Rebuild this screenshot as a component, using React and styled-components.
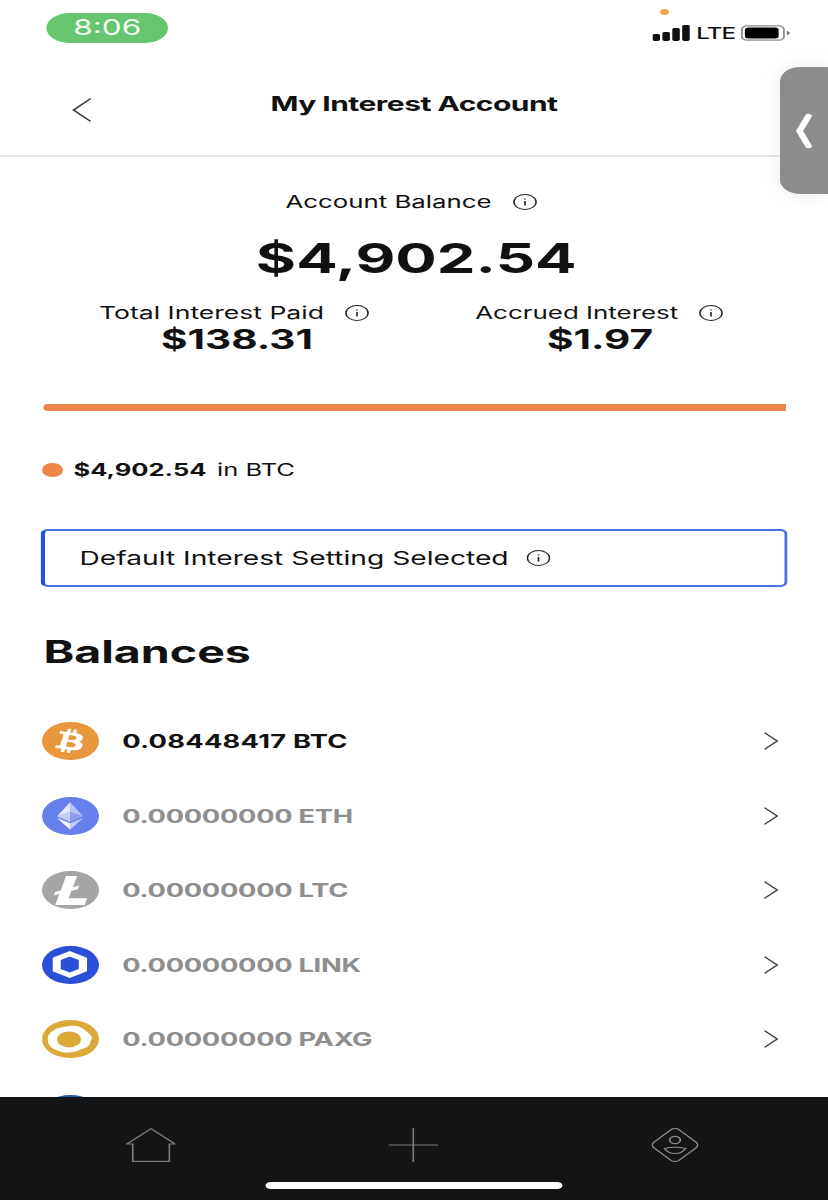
import React from "react";
import styled, { createGlobalStyle } from "styled-components";
import { FaBtc } from "react-icons/fa";

const GlobalStyle = createGlobalStyle`
  html, body {
    margin: 0;
    padding: 0;
    background: #fff;
    overflow: hidden;
  }
  body {
    font-family: Inter, "Liberation Sans", sans-serif;
  }
`;

// the capture is stretched horizontally, so the page is laid out at 552px and scaled up
const Page = styled.div`
  position: relative;
  width: 552px;
  height: 1200px;
  display: flex;
  flex-direction: column;
  overflow: hidden;
  background: #fff;
  color: #111;
  transform: scaleX(1.5);
  transform-origin: left top;
`;

const StatusBar = styled.div`
  height: 60px;
  flex: none;
  display: flex;
  justify-content: space-between;
  padding: 13px 25px 0 31px;
  box-sizing: border-box;
`;

const TimePill = styled.div`
  width: 81px;
  height: 30px;
  border-radius: 15px;
  background: #66c66e;
  color: #f4fbf4;
  font-size: 21px;
  line-height: 30px;
  text-align: center;
`;

const StatusIcons = styled.div`
  position: relative;
  display: flex;
  align-items: center;
  gap: 4px;
  height: 16px;
  margin-top: 12px;
`;

const Mic = styled.span`
  position: absolute;
  left: 5px;
  top: -16px;
  width: 6px;
  height: 6px;
  border-radius: 50%;
  background: #f2a54a;
`;

const Lte = styled.span`
  font-size: 16px;
  font-weight: 500;
  line-height: 16px;
  letter-spacing: -0.6px;
`;

const Header = styled.div`
  height: 97px;
  flex: none;
  box-sizing: border-box;
  border-bottom: 2px solid #e6e6e6;
  display: flex;
  align-items: center;
  justify-content: center;
  position: relative;
  padding-bottom: 7px;
`;

const Title = styled.h1`
  margin: 0;
  font-size: 20px;
  font-weight: 700;
  letter-spacing: -0.35px;
`;

const BackButton = styled.svg`
  position: absolute;
  left: 48px;
  top: 38px;
`;

const SideTab = styled.div`
  position: absolute;
  right: 0;
  top: 67px;
  width: 32px;
  height: 127px;
  background: #8c8c8c;
  border-radius: 14px 0 0 14px;
  box-shadow: 0 0 16px rgba(0, 0, 0, 0.08);
  display: flex;
  align-items: center;
  padding-left: 10px;
  box-sizing: border-box;
`;

const Summary = styled.section`
  flex: none;
  display: flex;
  flex-direction: column;
  align-items: center;
  padding-top: 33px;
`;

const LabelRow = styled.div`
  display: flex;
  align-items: center;
  gap: 14px;
  font-size: ${props => props.$size || 17.2}px;
  line-height: 24px;
  height: 24px;
  padding-right: ${props => (props.$nudge === undefined ? 4 : props.$nudge)}px;
`;

const BigAmount = styled.div`
  font-size: 41px;
  font-weight: 700;
  line-height: 56px;
  margin: 16px 0 15px 3px;
`;

const Stats = styled.div`
  align-self: stretch;
  display: grid;
  grid-template-columns: 1fr 1fr;
  padding: 0 31px 0 37px;
`;

const Stat = styled.div`
  display: flex;
  flex-direction: column;
  align-items: center;
`;

const StatValue = styled.div`
  font-size: 27px;
  font-weight: 700;
  line-height: 30px;
  margin: 0 0 -1px;
`;

const Bar = styled.div`
  flex: none;
  height: 7px;
  width: 495px;
  margin: 50px 0 0 29px;
  background: #ee864b;
  border-radius: 3px 0 0 3px;
`;

const Legend = styled.div`
  flex: none;
  display: flex;
  align-items: center;
  height: 24px;
  margin: 47px 0 0 28px;
  font-size: 17px;
`;

const LegendDot = styled.span`
  width: 13.5px;
  height: 14px;
  border-radius: 50%;
  background: #ee864b;
  margin-right: 7.5px;
`;

const LegendAmount = styled.b`
  font-weight: 700;
  margin-right: 7px;
`;

const Notice = styled.div`
  flex: none;
  box-sizing: border-box;
  width: 498px;
  height: 58px;
  margin: 47px 0 0 27px;
  padding-left: 23px;
  display: flex;
  align-items: center;
  gap: 12px;
  border: 2px solid #4a6fe0;
  border-left: 3px solid #2450e0;
  border-radius: 5px;
  font-size: 18.8px;
`;

const Heading = styled.h2`
  flex: none;
  margin: 43px 0 0 29px;
  font-size: 31px;
  line-height: 44px;
  font-weight: 700;
`;

const List = styled.div`
  flex: 1;
  min-height: 0;
  overflow: hidden;
  margin-top: 30px;
`;

const Row = styled.div`
  height: 74.5px;
  display: flex;
  align-items: center;
  padding: 0 33px 0 28px;
  color: ${props => (props.$active ? "#111" : "#8e8e8e")};
  font-size: 18.2px;
  font-weight: 700;
  letter-spacing: ${props => (props.$active ? "0.15px" : "-0.2px")};
`;

const Coin = styled.div`
  width: 37.5px;
  height: 38px;
  border-radius: 50%;
  flex: none;
  background: ${props => props.$bg};
  display: flex;
  align-items: center;
  justify-content: center;
  color: #fff;
  margin-right: 16px;
`;

const Amount = styled.span`
  flex: 1;
`;

const BottomBar = styled.nav`
  flex: none;
  height: 103px;
  background: #141516;
  position: relative;
  display: flex;
  justify-content: space-between;
  padding: 31px 86px 0 84px;
  box-sizing: border-box;
`;

const HomeIndicator = styled.div`
  position: absolute;
  left: 177px;
  top: 85px;
  width: 198px;
  height: 7px;
  border-radius: 4px;
  background: #fff;
`;

const Info = () => (
  <svg width="16" height="16" viewBox="0 0 16 16" fill="none" stroke="#222">
    <circle cx="8" cy="8" r="7.4" strokeWidth="1" />
    <path d="M8 7v4.4" strokeWidth="1.1" />
    <path d="M8 4.4v1.2" strokeWidth="1.1" />
  </svg>
);

const RowChevron = () => (
  <svg width="10" height="18" viewBox="0 0 10 18" fill="none" stroke="#444" strokeWidth="1.2">
    <path d="M.6.6 9.2 9 .6 17.4" />
  </svg>
);

const SignalBars = () => (
  <svg width="25" height="16" viewBox="0 0 25 16" fill="#111">
    <rect x="0" y="9" width="5" height="7" rx="1.4" />
    <rect x="6.6" y="7" width="5" height="9" rx="1.4" />
    <rect x="13.2" y="3" width="5" height="13" rx="1.4" />
    <rect x="19.8" y="0" width="5" height="16" rx="1.4" />
  </svg>
);

const Battery = () => (
  <svg width="33" height="16" viewBox="0 0 33 16">
    <rect x=".6" y=".8" width="28" height="14.4" rx="3.5" fill="none" stroke="#8a8a8a" strokeWidth="1.2" />
    <rect x="2.6" y="2.6" width="22.5" height="10.8" rx="2.5" fill="#000" />
    <path d="M30.6 5.6 32.8 8l-2.2 2.4z" fill="#777" />
  </svg>
);

const EthIcon = () => (
  <svg width="17.5" height="28" viewBox="0 0 19 30">
    <path d="M9.5 0 0 15.2l9.5-4.2z" fill="#e6e9fb" />
    <path d="M9.5 0 19 15.2 9.5 11z" fill="#b8c2f5" />
    <path d="M0 15.2 9.5 11v10.5z" fill="#c5cdf7" />
    <path d="M19 15.2 9.5 11v10.5z" fill="#8d9cef" />
    <path d="M0 17.3 9.5 30v-7z" fill="#f2f4fd" />
    <path d="M19 17.3 9.5 30v-7z" fill="#c5cdf7" />
  </svg>
);

const LtcIcon = () => (
  <svg width="24" height="29" viewBox="0 0 24 29" fill="#fff">
    <path d="M9 0h7.5l-3 11.2 4.4-1.7-1 3.7-4.4 1.7-1.8 7.4H23l-1.5 6.7H1.8l2.8-11L.8 19.4l1-3.6 3.7-1.4z" />
  </svg>
);

const LinkIcon = () => (
  <svg width="23" height="27" viewBox="0 0 23 27">
    <path d="M11.5 0 23 6.8v13.4L11.5 27 0 20.2V6.8z" fill="#fff" />
    <path d="M11.5 5.5 17.5 9v9l-6 3.5-6-3.5V9z" fill="#2a50d8" />
  </svg>
);

const PaxIcon = () => (
  <svg width="31" height="28" viewBox="0 0 33 30">
    <path d="M16 1C21 0 25 2 27 5c2 3 4 4 5 7 1 3-1 5-1 8-1 4-5 5-8 7-4 3-10 3-14 1-5-2-8-6-8-11C0 11 3 7 7 4c3-2 6-2 9-3z" fill="#fff" />
    <ellipse cx="16" cy="15.5" rx="8.5" ry="8.5" fill="#dca838" />
  </svg>
);

const HomeIcon = () => (
  <svg width="33.4" height="34" viewBox="0 0 33.4 34" fill="none" stroke="#7a7a7a" strokeWidth="1.1">
    <path d="M.6 16 16.7.6 32.8 16h-3.9v17.4H4.5V16z" />
  </svg>
);

const PlusIcon = () => (
  <svg width="33" height="34" viewBox="0 0 33 34" fill="none" stroke="#7a7a7a" strokeWidth="1.1">
    <path d="M16.5 0v34M0 17h33" />
  </svg>
);

const ProfileIcon = () => (
  <svg width="32" height="34" viewBox="0 0 32 34" fill="none" stroke="#8a8a8a" strokeWidth="1.1">
    <path d="M13.6 1.4c1.4-1.1 3.4-1.1 4.8 0l11.6 12.8c1.4 1.6 1.4 4 0 5.6L18.4 32.6c-1.4 1.1-3.4 1.1-4.8 0L2 19.8c-1.4-1.6-1.4-4 0-5.6z" />
    <circle cx="16" cy="12" r="3.6" />
    <path d="M9 20.5c4-1.6 10-1.6 14 0-1.4 3-4 5-7 5s-5.6-2-7-5z" />
  </svg>
);

const coins = [
  { code: "0.08448417 BTC", bg: "#e8973d", icon: <FaBtc size={24} style={{ transform: "rotate(12deg)" }} />, active: true },
  { code: "0.00000000 ETH", bg: "#6580ea", icon: <EthIcon /> },
  { code: "0.00000000 LTC", bg: "#a5a5a5", icon: <LtcIcon /> },
  { code: "0.00000000 LINK", bg: "#2a50d8", icon: <LinkIcon /> },
  { code: "0.00000000 PAXG", bg: "#dca838", icon: <PaxIcon /> },
];

export default function App() {
  return (
    <>
      <GlobalStyle />
      <Page>
        <StatusBar>
          <TimePill>8:06</TimePill>
          <StatusIcons>
            <Mic />
            <SignalBars />
            <Lte>LTE</Lte>
            <Battery />
          </StatusIcons>
        </StatusBar>

        <Header>
          <BackButton width="13" height="24" viewBox="0 0 13 24" fill="none" stroke="#333" strokeWidth="1.3">
            <path d="M12.4.6 1 12l11.4 11.4" />
          </BackButton>
          <Title>My Interest Account</Title>
        </Header>

        <SideTab>
          <svg width="12" height="36" viewBox="0 0 12 36" fill="none" stroke="#fff" strokeWidth="4.5" strokeLinecap="round" strokeLinejoin="round">
            <path d="M9 3 3 18l6 15" />
          </svg>
        </SideTab>

        <Summary>
          <LabelRow>
            Account Balance <Info />
          </LabelRow>
          <BigAmount>$4,902.54</BigAmount>
          <Stats>
            <Stat>
              <LabelRow $size={17.7}>
                Total Interest Paid <Info />
              </LabelRow>
              <StatValue>$138.31</StatValue>
            </Stat>
            <Stat>
              <LabelRow $size={17.3} $nudge={1}>
                Accrued Interest <Info />
              </LabelRow>
              <StatValue>$1.97</StatValue>
            </Stat>
          </Stats>
        </Summary>

        <Bar />

        <Legend>
          <LegendDot />
          <LegendAmount>$4,902.54</LegendAmount> in BTC
        </Legend>

        <Notice>
          Default Interest Setting Selected <Info />
        </Notice>

        <Heading>Balances</Heading>

        <List>
          {coins.map(coin => (
            <Row key={coin.code} $active={coin.active}>
              <Coin $bg={coin.bg}>{coin.icon}</Coin>
              <Amount>{coin.code}</Amount>
              <RowChevron />
            </Row>
          ))}
          <Row>
            <Coin $bg="#1f5ca8" />
          </Row>
        </List>

        <BottomBar>
          <HomeIcon />
          <PlusIcon />
          <ProfileIcon />
          <HomeIndicator />
        </BottomBar>
      </Page>
    </>
  );
}
